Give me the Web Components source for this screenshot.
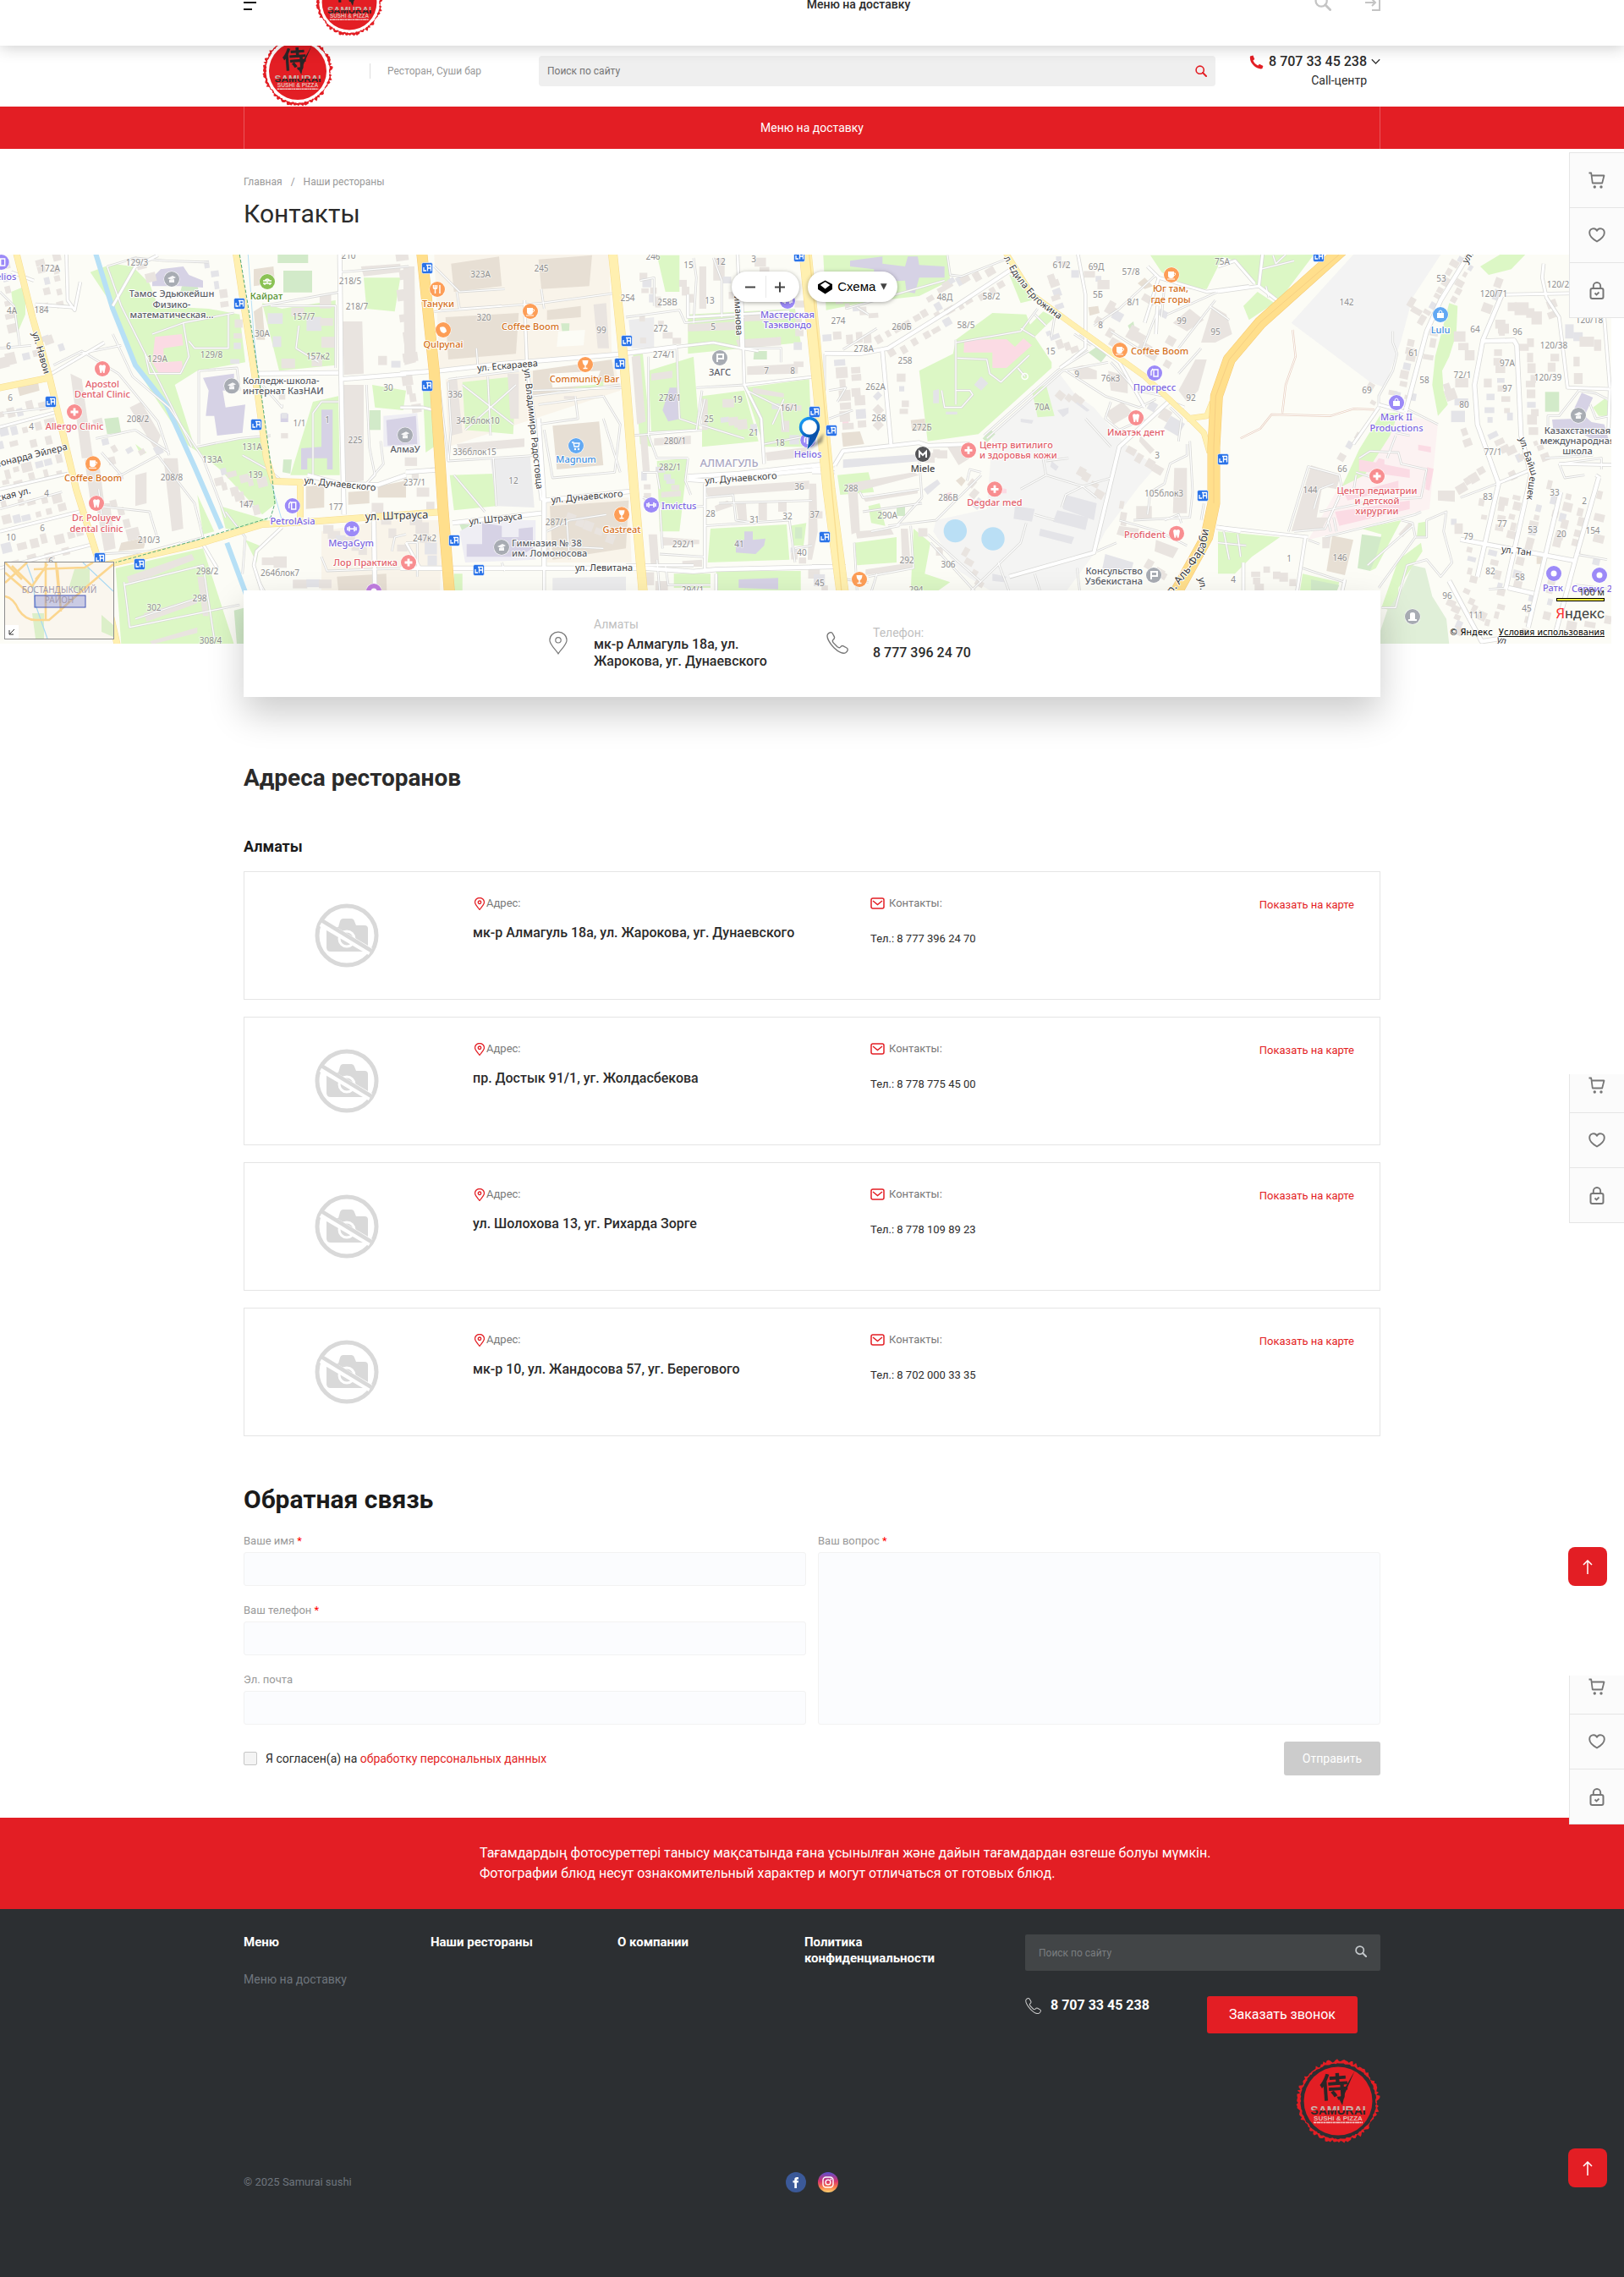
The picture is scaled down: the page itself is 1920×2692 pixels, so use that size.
<!DOCTYPE html>
<html lang="ru">
<head>
<meta charset="utf-8">
<meta name="viewport" content="width=device-width, initial-scale=1">
<title>Контакты</title>
<style>
  :root {
    --red: #e31e24;
    --dark: #2c2f32;
    --line: #e5e5e5;
    --muted: #999;
    --gutter: 15%;
  }
  body {
    margin: 0;
    position: relative;
    background: #fff;
    color: #2b2b2b;
    font-family: Roboto, "Liberation Sans", sans-serif;
    font-size: 14px;
    line-height: 20px;
  }
</style>
</head>
<body>
<site-header></site-header>
<nav-bar></nav-bar>
<main>
  <page-head></page-head>
  <city-map></city-map>
  <contact-card></contact-card>
  <restaurant-list>
    <restaurant-item address="мк-р Алмагуль 18а, ул. Жарокова, уг. Дунаевского" phone="8 777 396 24 70"></restaurant-item>
    <restaurant-item address="пр. Достык 91/1, уг. Жолдасбекова" phone="8 778 775 45 00"></restaurant-item>
    <restaurant-item address="ул. Шолохова 13, уг. Рихарда Зорге" phone="8 778 109 89 23"></restaurant-item>
    <restaurant-item address="мк-р 10, ул. Жандосова 57, уг. Берегового" phone="8 702 000 33 35"></restaurant-item>
  </restaurant-list>
  <feedback-form></feedback-form>
</main>
<notice-band></notice-band>
<site-footer></site-footer>
<sticky-header></sticky-header>
<side-panel style="--top:180px;--height:196px"></side-panel>
<side-panel style="--top:1270px;--height:176px"></side-panel>
<side-panel style="--top:1981px;--height:176px"></side-panel>
<up-button style="--top:1829px"></up-button>
<up-button style="--top:2540px"></up-button>

<script>
const define = (name, html, after) => customElements.define(name, class extends HTMLElement {
  connectedCallback() {
    if (this.shadowRoot) return;
    const root = this.attachShadow({ mode: 'open' });
    const t = document.createElement('template');
    t.innerHTML = '<style>:host,*{box-sizing:border-box}a{color:inherit;text-decoration:none}button,input,textarea{font:inherit}svg{display:block}</style>' +
      (typeof html === 'function' ? html(this) : html);
    root.append(t.content.cloneNode(true));
    if (after) after(root);
  }
});

/* Repeatable pseudo-random numbers for the hand-drawn shapes */
const random = seed => () => (seed = (seed * 16807) % 2147483647) / 2147483647;

const svg = (w, h, box, body, attrs = '') =>
  `<svg width="${w}" height="${h}" viewBox="${box}" fill="none" aria-hidden="true" ${attrs}>${body}</svg>`;
const icons = {
  search: (c, s = 14, w = 2) => svg(s, s, '0 0 14 14', `<circle cx="5.7" cy="5.7" r="4.6" stroke="${c}" stroke-width="${w}"/><path d="M9 9l4 4" stroke="${c}" stroke-width="${w + .4}" stroke-linecap="round"/>`),
  handset: c => svg(17, 17, '0 0 17 17', `<path d="M1 1.6 4.4.5 6.3 5 4.4 6.6C5.4 9 7.5 11.3 10.2 12.6L12 10.7l4.400 2.200-1.100 3.400C8.400 17.600-.4 9.500 1 1.600z" fill="${c}"/>`),
  handsetLine: (c, s) => svg(s, s, '0 0 26 26', `<path d="M1.600 2.800C3.400.5 6-.2 7.300 2l2.100 3.900c.6 1.500-.1 2.500-1.500 3.600-1 .9-.6 2.100.3 3.400l4.800 4.900c1.300 1 2.500 1.400 3.500.3 1.100-1.400 2.200-2 3.700-1.300l3.800 2.200c2.100 1.300 1.300 3.700-1 5.500-3 2.200-8.800-.6-13.800-5.500C4.400 14.100-.7 6.200 1.600 2.800z" stroke="${c}" stroke-width="1.400"/>`),
  pin: (c, w, h, s) => svg(w, h, '0 0 24 30', `<path d="M12 29C9 24 1 17.500 1 11.500a11 10.500 0 0 1 22 0C23 17.500 15 24 12 29z" stroke="${c}" stroke-width="${s}"/><circle cx="12" cy="11.500" r="3.500" stroke="${c}" stroke-width="${s}"/>`),
  mail: svg(17, 14, '0 0 17 14', '<rect x="1" y="1" width="15" height="12" rx="2" stroke="#e31e24" stroke-width="1.500"/><path d="M3 4l5.500 4.500L14 4" stroke="#e31e24" stroke-width="1.500"/>'),
  cart: svg(20, 20, '0 0 20 20', '<path d="M.5 1.500h2.700l1.600 12h11.400L18.500 4.500H4" stroke="#777" stroke-width="1.800" stroke-linejoin="round"/><circle cx="7.300" cy="18" r="1.700" fill="#777"/><circle cx="15" cy="18" r="1.700" fill="#777"/>'),
  heart: svg(20, 18, '0 0 20 18', '<path d="M10 16.500C5 13.500 1.200 10 1.200 6.200c0-5.400 6.700-6.600 8.800-2.400 2.100-4.200 8.800-3 8.800 2.400 0 3.800-3.800 7.300-8.800 10.300z" stroke="#777" stroke-width="1.900" stroke-linejoin="round"/>'),
  lock: svg(18, 21, '0 0 18 21', '<rect x="1.500" y="8" width="15" height="12" rx="2" stroke="#777" stroke-width="2"/><path d="M4.800 8V5.200a4.200 4.200 0 0 1 8.400 0V8" stroke="#777" stroke-width="1.900"/><path d="M6.500 13.500l2 2 3-3" stroke="#777" stroke-width="1.800"/>')
};

/* Brand seal: red disc inside a torn ring */
const seal = (() => {
  const r = random(77), out = [], inn = [];
  for (let i = 0; i < 150; i++) {
    const a = i / 150 * Math.PI * 2, o = 45.5 + r() * 4.5;
    out.push(`${(50 + o * Math.cos(a)).toFixed(1)} ${(50 + o * Math.sin(a)).toFixed(1)}`);
    const n = 43.8 + r() * 1.6;
    inn.unshift(`${(50 + n * Math.cos(a)).toFixed(1)} ${(50 + n * Math.sin(a)).toFixed(1)}`);
  }
  return `M${out.join('L')}ZM${inn.join('L')}Z`;
})();
define('brand-logo', `<style>:host{display:block;width:var(--size,84px);flex:none}svg{width:100%;height:auto}</style>
<svg viewBox="0 0 100 100" role="img" aria-label="Samurai Sushi &amp; Pizza">
<defs><linearGradient id="g" x1="0" y1="0" x2="0" y2="1"><stop offset=".52" stop-color="#c9b3ab"/><stop offset=".52" stop-color="#2b2627"/></linearGradient></defs>
<path d="${seal}" fill="#e31e24"/><circle cx="50" cy="50" r="40.500" fill="#e31e24"/>
<text x="28" y="46" font-family="Noto Sans CJK JP,sans-serif" font-weight="700" font-size="34" fill="#2b2627" transform="rotate(-4 44 36)">侍</text>
<path d="M69.500 14.500L58 41l-3 14-3-6 3-9z" fill="#2b2627"/>
<text x="50" y="66" text-anchor="middle" font-family="Liberation Sans,sans-serif" font-weight="700" font-size="14" fill="url(#g)">SAMURAI</text>
<text x="50" y="72.500" text-anchor="middle" font-family="Liberation Sans,sans-serif" font-weight="700" font-size="8" fill="#e3b9b2">SUSHI &amp; PIZZA</text>
<path d="M21 75.300H79" stroke="#f3c4c2" stroke-width="1.800" stroke-dasharray="3 .5 5 .4 2 .5"/></svg>`);

define('site-header', `<style>
:host{display:flex;align-items:center;padding:42px var(--gutter) 0}
brand-logo{margin:0 43px 0 22px}
p{margin:0;padding-left:20px;width:200px;border-left:1px solid #ddd;font-size:12px;line-height:18px;color:var(--muted)}
form{flex:1;display:flex;align-items:center;height:36px;padding:0 10px;border-radius:4px;background:#efefef;margin-right:40px}
input{flex:1;min-width:0;border:0;padding:0;background:none;outline:0;font-size:12px}
input::placeholder{color:#757575;opacity:1}
form button{border:0;background:none;padding:0}
.tel{display:grid;grid-template-columns:17px auto 11px;align-items:center;column-gap:5px;width:155px}
.tel b{font-weight:500;font-size:16px;line-height:22px;text-align:right;white-space:nowrap}
.tel span{grid-column:1/3;text-align:right;color:#2b2b2b;line-height:22px}
</style>
<brand-logo></brand-logo><p>Ресторан, Суши бар</p>
<form><input type="search" placeholder="Поиск по сайту" aria-label="Поиск по сайту"><button type="button" aria-label="Найти">${icons.search('#e31e24', 14, 1.6)}</button></form>
<div class="tel">${icons.handset('#e31e24')}<b>8 707 33 45 238</b>${svg(11, 8, '0 0 11 8', '<path d="M.8 1.300l4.700 4.700 4.700-4.700" stroke="#333" stroke-width="1.300"/>')}<span>Call-центр</span></div>`);

define('nav-bar', `<style>:host{display:block;background:var(--red);padding:0 var(--gutter)}
a{display:block;height:50px;line-height:50px;text-align:center;color:#fff;border:solid rgba(255,255,255,.25);border-width:0 1px}</style>
<nav><a href="#">Меню на доставку</a></nav>`);

define('page-head', `<style>:host{display:block;padding:30px var(--gutter) 29px}
nav{display:flex;gap:10px;font-size:12px;line-height:18px;color:var(--muted)}
h1{margin:10px 0 0;font-size:30px;line-height:38px;font-weight:400}</style>
<nav><a href="#">Главная</a><span>/</span><a href="#">Наши рестораны</a></nav><h1>Контакты</h1>`);

define('sticky-header', `<style>
:host{position:absolute;top:-48px;left:0;right:0;height:102px;padding:0 var(--gutter);display:grid;grid-template-columns:1fr auto 1fr;align-items:center;background:#fff;box-shadow:0 2px 18px rgba(0,0,0,.2)}
div{display:flex;align-items:center}div:last-child{justify-content:flex-end;gap:40px}
brand-logo{--size:80px;margin-left:70px}a{font-weight:500;padding:4px 0 0 110px}
button{border:0;background:none;padding:0}
</style>
<div><button aria-label="Меню">${svg(15, 18, '0 0 15 18', '<path d="M0 1h15M0 9h15M0 17h10" stroke="#111" stroke-width="2.200"/>')}</button><brand-logo></brand-logo></div>
<a href="#">Меню на доставку</a>
<div><button aria-label="Поиск">${icons.search('#c4c4c4', 20, 1.6)}</button><button aria-label="Войти">${svg(18, 20, '0 0 18 20', '<path d="M8 1h9v18H8M0 10h12M8 6l4 4-4 4" stroke="#c4c4c4" stroke-width="2"/>')}</button></div>`);

/* ---- City map. Shapes are listed per 480px tile in thirds of a pixel. ---- */
const TX = { A: 0, B: 480, C: 960, D: 1440 };
const pt = (t, x, y) => [TX[t] + x / 3, y / 3 - 6];
const line = (t, s) => s.split(' ').map(p => pt(t, ...p.split(',').map(Number)).map(n => n.toFixed(1)).join(' ')).join('L');
function drawMap() {
  let o = '';
  const polys = (fill, t, list) => { for (const s of list.split('|')) o += `<path d="M${line(t, s)}Z" fill="${fill}"/>`; };
  const G = '#dcf7c5', P = '#d2eac9', B = '#e9e4e0', T = '#e7dfd4', L = '#d6d2e5', K = '#fbdbe4', S = '#e4e4e8';
  polys('#f9f4ea', 'B', '100,18 720,18 730,380 120,430|140,460 740,400 760,500 150,700|-80,960 130,960 120,1215 -300,1215 -300,1000|500,880 790,880 800,1110 500,1110');
  polys('#f4f4f3', 'C', '870,430 930,510 1000,560 1110,690 1220,770 1160,840 1040,1000 1000,1080 900,1215 640,1215 520,1140 430,1000 440,960 620,920 640,660');
  polys('#f3f3f3', 'D', '480,18 790,18 690,170 650,320 590,490 540,470 260,260');
  polys('#fcf2f2', 'D', '640,580 780,615 750,920 320,1030 430,840 600,660');
  polys(G, 'A', '320,80 400,50 470,60 530,120 560,200 740,210 850,230 870,400 700,430 620,480 690,700 930,660 980,900 930,940 780,780 720,730 660,690 560,540 490,430 400,200|410,1130 720,1060 830,1400 430,1400|930,190 1000,210 1190,180 1190,410 990,430|1290,100 1420,100 1400,220 1300,210|1110,540 1200,520 1205,800 1030,800|40,150 90,130 90,230 60,300|780,910 950,960 870,1000 800,990|700,870 760,1000 720,1010|1320,480 1440,500 1430,570 1330,560|870,1030 920,1050 910,1110|480,690 520,720 500,730');
  polys(P, 'A', '985,18 1093,18 1093,48 985,48|1005,75 1107,75 1107,152 1005,152|370,600 420,595 430,650 380,655|1310,570 1350,570 1350,640 1310,640|830,1280 870,1270 870,1400 840,1400|1005,745 1035,745 1030,795 1002,790|645,130 700,125 705,150 640,150');
  polys(G, 'B', '155,800 310,795 320,910 170,925|200,470 390,450 380,655 210,640|510,460 700,440 700,490 520,500|890,20 970,20 970,150 920,150|860,430 1020,380 1040,640 870,650|1200,490 1430,460 1440,700 1270,700|1000,230 1380,210 1400,330 1000,370|1050,520 1200,500 1250,680 1050,700|890,750 1000,740 970,1000 900,1000|1080,990 1350,975 1360,1100 1070,1110|60,500 85,500 100,700 70,720|1100,1140 1400,1140 1400,1215 1100,1215|805,370 840,370 870,700 830,690|950,1150 1080,1150 1080,1200 950,1200|60,18 80,60 90,160|1360,980 1420,970 1410,1050 1370,1050|170,1150 200,1150 200,1215 170,1215');
  polys(P, 'B', '550,262 580,262 578,300 556,305|1235,360 1280,360 1280,390 1232,390|190,975 240,975 240,1000 200,1000|1380,985 1405,985 1405,1025 1380,1025');
  polys(G, 'C', '510,320 640,225 760,230 790,310 850,400 850,420 590,655 410,680 380,430 500,370|780,500 830,480 860,590 800,595|360,990 420,1040 400,1150 490,1180 440,1215 350,1215|40,20 480,20 490,110 380,165 200,185 50,215|750,290 820,220 860,240 790,310|90,800 200,790 220,860 100,870|150,1040 300,1020 300,1110 160,1120|1200,20 1460,20 1430,80 1400,140 1340,140 1240,80|700,90 760,110 780,180 740,190|200,910 240,900 260,980 210,970');
  polys(P, 'C', '605,670 635,640 650,655 620,685|980,365 1010,345 1045,375 1025,400|300,908 330,905 330,945 300,945|1120,270 1140,255 1145,285 1130,290');
  polys(G, 'D', '0,20 340,18 210,190 140,130 60,40|90,200 140,150 200,190 110,250|820,190 850,200 845,300 820,380 795,430 800,500 815,550 780,590 760,480 770,380|930,60 1000,18 1090,18 1040,70 960,90|0,1000 220,1020 120,1090 60,1150 0,1150|580,580 640,580 610,660 520,800 440,840 500,710|510,990 650,960 560,1130 540,1140 580,1010|640,1100 720,1040 725,1070 640,1200 640,1290 580,1270|1330,560 1370,530 1390,540 1390,590 1350,590|300,1150 430,1180 420,1215 290,1215|710,970 735,965 740,1020 705,1020');
  polys(P, 'D', '510,1010 580,1020 560,1090 540,1140 495,1130|1160,505 1210,505 1210,575 1160,575|330,1170 430,1190 420,1215 330,1215');
  polys('#e0efd8', 'D', '560,1400 600,1280 650,1210 690,1120 735,1130 760,1230 810,1310 820,1400');

  /* Buildings */
  polys(L, 'A', '540,100 570,70 650,60 670,90 720,110 720,135 640,130 540,130|720,455 830,440 830,500 790,500 800,560 870,550 860,650 770,660 760,590 730,590 740,500|1140,568 1180,568 1180,780 1160,780 1160,740 1090,740 1090,780 1068,780 1068,705 1140,700|1370,605 1475,590 1480,690 1375,695|995,583 1022,583 1022,612 995,612');
  polys(B, 'A', '580,740 630,740 650,990 610,1000|250,440 290,460 330,740 290,740|460,560 500,540 570,660 550,710|300,745 350,745 370,900 320,890|1215,255 1285,255 1290,440 1220,445|1430,60 1470,60 1475,400 1435,410|1215,480 1290,480 1290,820 1215,830|450,1160 680,1080 690,1100 460,1190|510,1290 700,1235 700,1255 520,1320|530,1390 700,1340 700,1360 540,1400|480,800 520,790 520,900 480,910|1280,60 1420,50 1420,80 1290,95|700,1160 725,1160 740,1300 720,1300|340,900 390,900 410,1060 370,1070');
  polys(T, 'A', '900,70 970,60 975,120 900,130|900,220 930,200 940,320 910,320|1085,840 1150,835 1150,915 1085,920|1235,860 1310,855 1310,900 1235,905|1195,1160 1370,1150 1372,1210 1200,1210|1340,840 1440,820 1440,880 1340,880|430,1040 520,1020 510,1060 420,1070|60,480 135,470 140,500 70,520');
  polys(K, 'A', '550,310 645,300 650,340 580,350 580,400 645,395 650,435 565,440 540,400');
  polys('#efeef4', 'B', '-80,590 40,580 50,700 -80,700|190,1000 260,960 460,960 460,1100 210,1110');
  polys(L, 'B', '270,970 340,980 340,1020 400,1020 400,990 450,985 450,1060 400,1090 215,1090 215,1045 270,1045|-70,605 35,590 40,690 -65,695|935,490 960,490 965,540 975,600 930,610 910,570|1170,1030 1200,1030 1200,1000 1230,1000 1230,1030 1275,1025 1270,1050 1240,1080 1170,1075|1180,1170 1320,1165 1320,1205 1180,1200');
  polys('#ececed', 'B', '300,745 440,735 455,915 320,910|790,250 880,240 880,350 800,350|520,1165 780,1160 780,1215 520,1215');
  polys(T, 'B', '160,50 330,25 340,130 170,150|470,35 660,20 650,130 480,140|140,240 400,225 390,370 150,390|520,625 685,610 700,765 535,780|500,215 620,200 620,240 500,250|450,430 730,390 740,460 450,520|510,910 790,890 780,1060 520,1100');
  polys('#fcfcf6', 'B', '540,290 635,285 630,340 535,345|510,440 690,430 670,480 520,490');
  polys(B, 'B', '665,195 710,190 720,350 680,350|145,470 180,450 200,650 160,660|360,440 400,440 400,600 370,600|180,690 420,670 420,700 190,720|560,520 600,520 600,530 560,530|800,380 830,375 850,610 820,620|830,660 855,660 865,790 840,790|870,440 945,430 945,455 870,465|880,670 1010,660 1010,690 880,695|1000,265 1190,255 1190,285 1000,290|1210,415 1390,405 1390,440 1210,445|1060,845 1430,820 1430,850 1070,875|860,1010 890,1010 900,1140 870,1140|1195,225 1345,215 1345,250 1200,255|1170,320 1330,310 1330,340 1180,350|1090,30 1130,30 1130,110 1090,110|1040,60 1065,60 1065,210 1040,210|1230,490 1340,510 1340,525 1230,510|1275,720 1430,700 1430,735 1280,750|910,1020 1040,1030 1040,1045 910,1050|905,860 975,855 975,875 905,880|1430,830 1455,830 1460,1000 1440,1100 1425,1100|1095,910 1140,890 1160,910 1100,930|1170,900 1205,895 1210,960 1180,965|1250,895 1280,895 1280,960 1250,960|1320,890 1350,890 1350,930 1320,930|1050,530 1070,530 1070,640 1050,640|980,1105 1050,1100 1050,1125 980,1125');
  polys(L, 'C', '135,40 250,25 250,50 330,60 340,25 375,25 380,55 470,60 470,100 380,100 365,155 335,150 330,110 140,120 220,90 220,70 135,60');
  polys(K, 'C', '540,320 690,318 720,345 750,315 780,340 690,420 640,420 640,365 538,365|475,865 495,860 495,890 475,895|670,845 690,850 690,865 670,865|108,600 130,600 130,620 108,620');
  polys(S, 'C', '110,745 390,725 390,750 110,775|720,910 790,920 780,965 715,955|870,925 980,950 970,995 855,965|900,870 1010,900 1000,960 890,920|810,990 930,1020 920,1045 805,1015|1040,1080 1140,1110 1130,1150 1030,1130|600,450 625,475 600,500 575,480|430,500 450,495 450,545 430,545|640,1150 690,1160 680,1180 640,1175|850,750 875,770 865,785 845,770|870,570 910,560 910,580 890,595|395,850 445,815 455,830 410,870|935,530 985,570 975,575 935,545|740,600 785,605 780,618 740,612|475,575 515,575 515,585 475,585');
  polys(B, 'C', '125,830 360,790 380,800 150,860|180,880 375,850 375,865 190,895|155,1000 280,990 290,1010 160,1025|190,1135 355,1110 355,1130 190,1155|315,990 340,990 350,1120 320,1120|125,830 160,830 170,1000 140,1010|1040,580 1100,540 1140,580 1070,620|1280,260 1340,210 1390,250 1330,290|1300,500 1360,390 1400,390 1370,500 1330,540|1420,200 1470,230 1490,300 1430,330 1380,330|1285,775 1330,775 1330,935 1280,935|1150,910 1205,910 1205,955 1150,955|920,420 960,410 1010,430 1010,460 950,460|1050,430 1120,450 1120,510 1060,500|1090,980 1160,990 1150,1030 1080,1010|1220,1030 1300,1060 1280,1095 1215,1070|480,700 520,690 560,740 520,765|1165,660 1215,710 1200,725 1160,680');
  polys(T, 'C', '105,650 170,645 185,690 110,700|980,205 1015,200 1020,225 985,235|510,820 530,805 545,820 530,840|350,605 400,600 405,640 355,645|1155,120 1180,100 1210,130 1180,140');
  polys(B, 'D', '330,765 435,800 420,850 370,840 350,950 390,950 370,990 260,1000|780,855 840,855 840,895 780,890|640,1010 680,965 690,975 655,1020|370,1020 400,1020 395,1060 370,1060');
  polys(T, 'D', '405,1015 480,1030 450,1155 385,1140|1130,1090 1150,1090 1145,1115 1130,1115');
  polys(K, 'D', '500,745 560,755 570,740 590,745 590,762 680,780 680,810 500,785|415,930 680,890 680,920 430,980|450,870 640,820 640,850 460,890|710,692 755,700 755,720 710,712|742,772 765,778 750,855 735,850');
  polys(L, 'D', '1290,508 1330,525 1300,590 1325,612 1370,620 1390,690 1320,670 1290,650 1190,650 1185,603 1260,600 1265,560');

  /* Rows of small houses */
  const rnd = random(4211);
  const row = (t, x1, y1, x2, y2, n, size, rot) => {
    for (let i = 0; i < n; i++) {
      const k = n > 1 ? i / (n - 1) : 0;
      const [x, y] = pt(t, x1 + (x2 - x1) * k + rnd() * 16 - 8, y1 + (y2 - y1) * k + rnd() * 16 - 8);
      const w = size * (.6 + rnd() * .7), h = size * (.6 + rnd() * .6);
      o += `<rect x="${(x - w / 2).toFixed(1)}" y="${(y - h / 2).toFixed(1)}" width="${w.toFixed(1)}" height="${h.toFixed(1)}" fill="${rnd() > .2 ? B : S}" transform="rotate(${rot} ${x.toFixed(1)} ${y.toFixed(1)})"/>`;
    }
  };
  const rows = (t, spec) => spec.split('|').forEach(s => row(t, ...s.split(',').map(Number)));
  rows('A', '150,40,170,190,5,9,-14|195,30,220,190,5,9,-14|20,50,40,280,6,10,-14|150,310,210,340,3,10,-20|0,590,150,550,5,10,-14|20,650,170,620,5,10,-14|0,700,170,680,4,9,-14|20,790,210,740,6,10,-14|20,830,210,790,5,9,-14|20,900,210,880,5,10,-14|20,960,220,920,6,9,-14|30,1060,290,1000,7,10,-14|60,1110,230,1070,4,9,-14|0,410,130,360,4,12,-14|790,780,930,830,5,10,-14|770,820,910,920,6,10,-14|480,30,530,100,3,10,-14|740,60,800,190,5,9,-8|970,240,980,330,2,15,0|1060,220,1110,270,2,14,0|1150,190,1160,330,3,15,0|1020,400,1130,400,2,14,0|1360,400,1410,400,2,12,0|950,1110,990,1110,2,14,0|1070,1180,1150,1190,3,14,0|840,260,840,390,4,9,0|340,610,420,810,4,10,-14|410,710,560,720,4,10,-30|1340,920,1420,1060,4,12,0|1160,990,1290,1070,6,12,0|400,900,470,1010,4,12,-14|1000,520,1010,660,3,9,0');
  rows('B', '-20,20,10,380,6,14,-8|0,460,40,560,4,10,-8|20,760,80,900,4,12,0|40,960,100,1100,5,13,0|850,90,890,190,5,11,0|850,150,840,330,3,9,0|1260,40,1280,150,4,11,0|910,270,960,330,3,10,0|980,120,1010,180,3,10,0|1130,600,1230,640,4,10,-6|1350,620,1370,680,2,12,0|900,780,960,840,4,9,0|850,800,860,880,3,9,0|1150,540,1180,620,2,12,0|1390,200,1400,400,5,10,0|1310,560,1400,560,4,10,0|1440,1140,1480,1210,3,12,0|860,1160,900,1200,2,13,0|460,1040,500,1080,2,12,0|1110,70,1180,200,4,8,0|1370,1060,1400,1100,3,8,0|590,950,720,1020,5,10,20');
  rows('C', '90,180,210,240,5,9,-4|60,310,200,320,5,11,-4|230,320,440,200,7,9,-30|290,370,480,260,6,9,-30|420,170,520,110,4,9,-30|450,240,670,130,7,9,-30|490,110,630,80,4,9,-30|100,400,120,630,7,11,-4|150,420,170,620,6,10,-4|320,460,330,580,4,10,0|230,520,230,620,3,9,45|850,100,880,200,5,9,-20|990,90,1040,130,3,11,0|870,30,930,80,3,9,0|840,300,930,360,5,9,-20|880,520,960,540,4,8,40|1060,210,1090,240,3,13,30|1020,260,1080,330,3,13,30|1140,290,1200,370,4,14,30|1200,180,1250,220,2,13,30|1280,320,1260,400,2,10,30|540,1080,600,1190,4,9,30|960,790,1020,860,4,9,30|1200,560,1290,620,3,15,30|400,1000,450,1070,2,10,0|570,830,590,900,3,12,40|1140,720,1220,780,4,11,30|1100,910,1110,970,3,8,10|70,800,30,940,2,10,0|1200,1110,1280,1190,4,10,30|420,740,470,720,3,10,0');
  rows('D', '860,30,740,220,8,9,30|890,60,830,180,5,8,30|690,190,720,250,3,11,30|690,330,660,480,6,9,12|770,290,740,380,3,10,10|620,510,690,530,4,8,10|540,480,550,540,2,8,30|860,310,890,380,3,11,0|870,480,850,590,3,13,0|820,490,830,510,2,11,-20|870,640,880,690,2,11,-20|960,480,960,610,4,9,0|990,360,1030,600,8,9,0|1000,120,960,210,3,11,20|1000,260,1010,300,3,10,0|1040,200,1130,240,4,13,0|1110,330,1080,350,2,12,0|1110,390,1120,640,9,10,0|1190,380,1190,420,2,9,0|1245,290,1340,340,4,14,0|1270,400,1275,450,2,11,0|980,660,1070,740,5,10,-25|1080,740,1050,800,2,10,-25|870,840,930,790,4,10,-30|930,900,940,950,2,9,10|1010,890,1000,980,4,9,10|1060,880,1040,1010,5,9,14|1130,920,1100,1060,6,9,14|1180,830,1190,940,3,9,14|1240,880,1210,1040,6,9,14|1290,930,1270,1080,5,9,14|1350,870,1340,1100,4,10,14|890,1060,900,1170,4,9,14|980,1080,1000,1220,5,9,14|1070,1100,1060,1190,3,9,14|1110,1230,1080,1350,4,9,14|1190,1170,1170,1300,4,9,14|830,1250,860,1350,5,9,25|880,1220,930,1300,4,9,25|130,1150,140,1200,3,9,0|180,1140,260,1180,4,9,0|500,660,440,740,3,8,30|1190,190,1180,230,2,10,-20|840,970,850,990,2,11,0|1380,1320,1260,1340,3,11,10|1130,680,1160,730,3,8,-20|1010,1260,960,1320,3,9,14');

  /* Water */
  o += `<g fill="none" stroke="#b7e0f6" stroke-linejoin="round"><path stroke-width="6" d="M${line('A', '335,0 400,210 480,410 590,550 690,770 785,990')}M${line('A', '805,1040 870,1215 930,1400')}"/><path stroke-width="1" d="M${line('A', '880,18 900,300 930,600 960,820 1000,960')}"/></g>`;
  for (const [x, y] of [[508, 998], [642, 1026]]) { const [a, b] = pt('C', x, y); o += `<circle cx="${a}" cy="${b}" r="13.7" fill="#badff5"/>`; }

  /* Roads: casing first, then fill */
  const roads = [];
  const road = (w, kind, t, list) => list.split('|').forEach(s => roads.push([w, kind, 'M' + line(t, s)]));
  road(1.2, 0, 'A', '380,60 480,30 590,40 740,45|540,300 650,260 830,225|650,260 670,380 640,440 530,440 515,370|670,325 690,350 810,350 810,230|705,690 705,430 840,420 850,500|700,700 850,670 960,660|190,410 290,360 420,440 560,610 600,730|280,370 430,340|340,670 480,640 600,720|360,720 430,800 560,730 690,900 720,1020|350,1080 550,1070 720,1020|350,910 530,930 560,1030|400,300 470,450 600,560 720,740 800,950|440,1180 460,1340 850,1260|440,1190 720,1120 760,1380|480,1310 720,1230|1300,480 1310,700 1330,800 1300,830|1110,800 1110,580 1140,540 1200,540|930,480 1000,560 1000,550|930,200 1210,150|1210,80 1450,60|1060,270 1050,350 1130,400|960,200 1190,200 1190,420|0,350 110,340|0,150 50,200 70,340|10,580 180,560|350,850 360,940|910,1160 940,1215|1140,1090 1160,1140 1440,1130|1390,1070 1400,1020 1440,1010|800,930 870,1020 860,1150|380,60 430,200 590,520 680,700|1350,680 1360,760 1300,830|0,920 220,860|420,1100 640,1040|860,730 950,780 1000,820');
  road(2.8, 0, 'A', '235,0 240,180 265,215 285,115|125,195 260,205|0,630 195,578|0,850 240,795|0,1000 300,925|0,1130 330,1045|175,445 370,330|1000,985 910,1070 900,1120 930,1215|720,1045 770,1130|400,200 480,60 560,20|40,80 120,110');
  road(4.5, 0, 'A', '905,440 1200,437|1205,0 1210,460 1220,940|1210,460 1440,442|1090,800 1200,830 1340,835 1440,800|1325,930 1330,1215');
  road(1.2, 0, 'B', '100,60 190,150 350,140|180,150 190,210 340,200|480,140 490,210|100,220 480,190 740,155|250,350 255,420|470,550 700,520|600,520 610,600 470,620|700,520 760,620 740,790 520,810 490,640|700,600 760,790|440,520 760,480|150,470 160,640 150,750 460,730|310,740 320,910|450,500 770,490|860,380 860,660 890,740 1000,740|860,650 1030,640 1050,500|960,350 970,600 1030,620|780,240 970,215 990,260 1200,240|830,110 880,100 880,200|1020,30 1030,100 1020,260|1090,30 1120,110 1120,240|1030,490 1200,480|1060,530 1040,620 1200,670|1200,350 1330,350 1330,400|1210,500 1330,560 1340,640|1270,690 1430,660|1340,530 1300,620|900,920 1060,910|1060,880 1160,870 1170,960 1240,970|1110,900 1440,890|900,1080 1060,1090|1060,980 1360,960 1380,1110|840,880 900,900 910,1060|1000,740 990,820 1010,870|500,1000 580,960 710,940|500,1050 700,1060|570,960 580,1100|150,460 400,430|60,500 120,500 150,750|800,660 1050,640|840,790 890,790 900,850|890,1100 900,1215|1380,1060 1440,1050|0,1040 40,1040 40,1160|200,480 380,620|210,640 390,480|170,800 280,930|290,450 300,660|340,1110 350,1140|920,1120 930,1190 1080,1190');
  road(2.6, 0, 'B', '-20,560 60,560 100,570|490,890 490,1215|1190,120 1200,480 1260,600 1270,760|1175,0 1190,350|960,345 1090,330 1190,350 1250,360|1200,480 1460,450|1060,830 1060,1140|1000,160 1000,240 1360,220|780,1120 1020,1120|1100,1150 1100,1215|460,730 480,890|420,180 430,430 460,640|0,1040 50,1130');
  road(4.5, 0, 'B', '-20,440 120,430 340,405 750,372 960,345|470,600 490,890 490,1130|490,890 800,857|165,970 480,935|-20,1130 130,1130 850,1130 1020,1142 1100,1135 1510,1125|0,790 130,780|1000,805 1180,795 1500,760|1000,815 1060,820 1510,775');
  road(1.2, 0, 'C', '480,20 490,90 530,95 700,30|120,210 470,110|160,205 200,230|45,370 45,500|60,500 120,490 90,540|145,570 60,600|230,280 110,355|510,320 510,550|515,385 620,390 630,440 670,470 770,375|510,500 560,500 570,515 530,560 470,560 460,500|730,420 755,450|510,330 740,290 800,210|740,280 790,310|790,230 830,270|610,660 870,430 980,360|620,670 890,430 1050,400|900,430 1040,520 1160,560 1220,530|740,850 830,800 960,840 1060,810|830,800 815,720|830,750 910,740|900,870 960,840 1010,880|900,870 885,915|790,940 860,960|760,970 740,1040 560,1215|660,1110 700,1215|410,1010 600,1180|420,1040 580,1215|390,880 300,980|270,980 440,960 600,800|550,820 560,780 600,790|390,880 380,740|350,980 360,1130 200,1160|170,860 180,880 380,850|180,930 390,900|210,1000 310,980|790,1150 810,1215|950,300 1060,370 1200,470|970,600 1060,700|1060,540 1040,600 1090,640 1180,600|1060,400 1150,500 1250,520|1000,270 1090,210 1220,90|1060,290 1170,360 1220,230|1240,240 1250,130|1260,230 1440,150|1300,350 1430,180|1270,560 1310,600 1300,680|1330,690 1330,730 1270,760 1250,830 1200,860 1190,940|1340,680 1350,860 1340,950 1140,960|1090,960 1230,1000 1330,1050|1010,1070 1080,1040|1380,960 1390,900|1250,960 1300,940 1310,970|1410,200 1480,250|1380,350 1300,440|860,240 850,310|930,300 990,340|150,1040 160,1215|230,1150 210,1215|940,1130 950,1215|120,1170 200,1180');
  road(2.8, 0, 'C', '940,0 970,160 970,350 920,390 880,420|1190,60 1230,100 1400,150 1550,130|1180,260 1230,100|980,320 1090,400 1180,560|1225,200 1220,300|1320,560 1270,540|0,770 80,765|0,790 80,790');
  road(4, 0, 'C', '45,368 170,370 270,350 480,220 700,75|250,360 280,690|80,765 110,715 380,685 410,695 560,690|1270,535 1090,700 1000,1075 700,1160|0,1125 120,1125|1435,985 1520,1000');
  road(1.2, 0, 'D', '195,20 205,50 240,18|150,70 270,40|620,290 620,330 635,370 620,430 570,520 570,560|500,740 540,715 640,720 650,760 740,780 720,880 560,890 360,930|490,800 480,860|490,790 550,810|630,660 600,740|660,560 780,620|680,660 630,650|380,1020 700,940 720,930|430,880 390,960 400,1000|410,950 420,1000|250,1000 320,770 430,800 440,850 380,990 270,1000|340,920 360,850 410,830|650,960 690,970 700,1020 570,1200|700,1020 740,1020 740,960 810,930 800,1000 830,1110 790,1160 740,1100 670,1120 630,1270 580,1270|300,1130 450,1180|0,1040 100,1050|20,1000 40,1100|70,1010 80,1090|860,880 990,830|1170,640 1170,590 1210,590 1280,500 1340,510 1380,530|1210,760 1360,740 1360,780|1210,760 1230,810 1300,800|320,1030 360,1045|1270,1190 1440,1210|960,1205 1030,1200|1265,1080 1380,1100|1160,740 1330,730|530,1120 690,980|1320,550 1340,600 1390,590|170,130 180,170');
  road(3, 0, 'D', '160,0 145,130 210,180|0,150 145,130|0,60 60,40 130,120|570,560 480,690|570,550 660,575|1155,50 1150,100 1165,170 1210,240 1240,490 1390,495|1020,160 1260,155|1340,800 1355,810|1370,240 1390,490|1390,495 1385,640|990,830 1100,785|0,985 320,1020|310,1020 280,1215|90,1110 90,1215|1210,760 1440,765|450,1170 440,1215');
  road(4.5, 0, 'D', '900,0 790,180 740,290 665,575|1005,165 940,320 910,480 920,620 995,830 920,1160|940,325 1050,322 1060,340 1075,660 1110,800 1020,1205|860,1028 1270,1105|1215,860 1100,1340|1350,810 1270,1090 1200,1350|820,1175 935,1390 1000,1380|1030,1200 1120,1220');
  road(7, 1, 'A', '55,0 115,240 175,450 270,850 345,1090 420,1420|-10,492 175,455|345,1125 700,1045 930,975 1100,965 1570,930|1065,950 1065,825 970,822 945,740 915,520 870,230 835,0');
  road(10, 1, 'B', '732,0 775,420 810,860 842,1230');
  road(14, 1, 'B', '1415,0 1455,400 1500,850 1550,1230');
  road(6, 1, 'C', '680,0 780,160 930,270 1180,450 1330,590 1390,650 1410,720|1330,600 1400,590 1420,540');
  road(12, 2, 'B', '55,0 100,430 130,900 155,1230');
  road(14, 2, 'C', '1880,0 1590,260 1480,390 1435,520 1425,700 1425,900 1400,1020 1290,1220');
  const casing = ['#d9d9d7', '#f7dc92', '#f6c973'], fill = ['#fff', '#fff0b0', '#ffdf8c'];
  o += '<g fill="none" stroke-linejoin="round">';
  for (let k = 0; k < 3; k++) {
    for (const [w, kind, d] of roads) if (kind === k) o += `<path d="${d}" stroke="${casing[k]}" stroke-width="${w + (k ? 1 : 1.6)}"/>`;
    for (const [w, kind, d] of roads) if (kind === k) o += `<path d="${d}" stroke="${fill[k]}" stroke-width="${w}"/>`;
  }
  const trail = `M${line('D', '80,670 150,635 190,585 400,590 480,565 555,568')}M${line('D', '228,580 240,480 275,380 265,285')}`;
  o += `<path d="${trail}" stroke="#e8cfc0" stroke-width="2.4"/><path d="${trail}" stroke="#fff" stroke-width="1"/>`;
  o += `<path d="M${line('C', '1870,18 1590,258 1480,390 1432,520 1425,700 1425,900')}" stroke="#f7cf82" stroke-width="1"/><path d="M${line('B', '1430,18 1470,400 1510,850 1545,1215')}" stroke="#f9dd8f" stroke-width="1.3"/>`;
  o += `<path d="M${line('A', '850,18 880,200 925,500 960,760 975,900 960,950 700,1030 410,1110')}" stroke="#57ad79" stroke-width="1" stroke-dasharray="4 2"/>`;
  const [rx, ry] = pt('C', 755, 450); o += `<circle cx="${rx}" cy="${ry}" r="3.5" stroke="#fff" stroke-width="1.5"/></g>`;

  /* House numbers */
  const text = (x, y, s, cls, rot = 0, anchor = 'middle') => {
    x = Math.round(x); y = Math.round(y);
    o += `<text class="${cls}" x="${x}" y="${y}" text-anchor="${anchor}"${rot ? ` transform="rotate(${rot} ${x} ${y - 4})"` : ''}>${s}</text>`;
  };
  const nums = {
    A: '172А,178,65|129/3,485,45|4А,42,215|184,147,212|6,31,342|6,37,524|129А,557,388|129/8,749,373|30А,929,298|157/7,1078,236|157к2,1129,379|218/5,1242,111|218/7,1267,200|210,1235,22|4,112,627|208/2,488,599|131А,893,698|133А,754,743|139,907,799|1/1,1061,615|1,1160,604|225,1260,676|30,1376,488|4,165,863|208/8,608,806|147,874,902|177,1190,912|6,149,988|10,40,1019|210/3,528,1030|298/2,735,1141|264блок7,993,1146|298,709,1235|302,547,1268|308/4,748,1385|6,180,1105',
    B: '237/1,30,826|323А,264,86|245,481,67|320,277,239|99,692,284|336,174,512|343блок10,256,605|336блок15,243,718|12,382,820|287/1,533,967|247к2,67,1022|246,875,25|15,1001,53|12,1117,43|3,1234,32|254,786,171|258В,928,187|13,1077,181|272,902,278|5,1088,272|274/1,916,373|7,1278,428|8,1370,428|278/1,935,526|19,1175,530|16/1,1359,560|25,1075,600|21,1232,647|18,1325,683|280/1,954,677|282/1,936,772|28,1079,935|31,1236,956|32,1352,946|37,1449,938|36,1394,841|292/1,983,1043|41,1183,1045|40,1405,1074|45,1467,1181|294/1,1016,1205',
    C: '48Д,472,167|58/2,635,165|61/2,884,55|69Д,1007,60|57/8,1131,79|75А,1455,41|5Б,1014,158|8/1,1140,185|274,94,252|260Б,319,274|58/5,545,268|8,1024,268|99,1310,253|95,1430,290|278А,182,352|15,846,359|258,329,392|9,940,440|76к3,1058,455|92,1344,526|262А,225,486|70А,816,558|268,237,598|272Б,391,631|3,1225,728|288,139,846|286В,483,878|290А,266,941|105блок3,1248,865|292,336,1100|306,484,1117|294,368,1205',
    D: '142,455,185|53,791,102|120/2,1207,122|120/71,979,155|64,912,283|96,1063,290|120/18,1318,248|120/38,1191,338|61,694,365|97А,1027,403|72/1,866,445|120/39,1170,452|58,733,461|97,1026,492|69,528,499|80,872,550|77/1,975,717|66,440,776|144,327,851|83,958,877|33,1195,860|2,1298,892|77,1009,973|53,1115,992|20,1217,1007|154,1330,995|79,887,1016|1,252,1096|146,431,1093|4,55,1169|82,965,1139|58,1070,1160|45,1095,1271|96,812,1228|111,915,1297'
  };
  for (const t in nums) for (const s of nums[t].split('|')) { const [v, x, y] = s.split(','); const p = pt(t, +x, +y); text(p[0], p[1] + 4, v, 'n'); }

  /* Street names */
  const st = (t, x, y, s, rot, cls = 's') => { const p = pt(t, x, y); text(p[0], p[1] + 4, s, cls, rot); };
  st('A', 148, 365, 'ул. Навои', 74); st('A', 110, 728, 'еонарда Эйлера', -14); st('A', 48, 868, 'ская ул.', -14);
  st('A', 1207, 832, 'ул. Дунаевского', 6); st('A', 1407, 946, 'ул. Штрауса', -2, 's b');
  st('B', 360, 410, 'ул. Ескараева', -5); st('B', 452, 635, 'ул. Владимира Радостовца', 84);
  st('B', 643, 877, 'ул. Дунаевского', -5); st('B', 317, 955, 'ул. Штрауса', -6); st('B', 702, 1128, 'ул. Левитана', 0);
  st('B', 1188, 811, 'ул. Дунаевского', -4); st('B', 1145, 758, 'АЛМАГУЛЬ', 0, 'd'); st('B', 1178, 215, 'Тайманова', 87);
  st('D', 1060, 1068, 'ул. Тан', 7); st('D', 886, 27, 'ул.', -58); st('C', 1385, 1185, 'ул.', 80); st('D', 1012, 1385, 'ул.', 15);
  const curve = (id, t, s, label, cls) => { o += `<path id="${id}" d="M${line(t, s)}" fill="none"/><text class="${cls}"><textPath href="#${id}">${label}</textPath></text>`; };
  curve('c1', 'C', '680,30 720,100 790,185 960,310', 'л. Едила Ергожина', 's');
  curve('c2', 'C', '1275,1225 1350,1130 1395,1060 1425,900', 'р. Аль-Фараби', 's b');
  curve('c3', 'D', '1068,670 1090,740 1108,790 1085,960', 'ул. Байшешек', 's');

  /* Places */
  const kinds = {
    food: ['#fd9e57', '#d4701a'], med: ['#f88e90', '#e2606a'], edu: ['#a8acb3', '#5c6066'], svc: ['#9c8af7', '#7c66de'],
    shop: ['#62a9f3', '#3f8fe0'], sport: ['#8bc255', '#55912b'], dark: ['#555558', '#444'], film: ['#c07de0', '#9a50c0']
  };
  const glyph = {
    cup: '<path d="M-4-4H3V1Q3 4-.5 4T-4 1z" fill="#fff"/><path d="M3-2h1.500q1 2-1.500 3M-5 5H4" stroke="#fff"/>',
    fork: '<path d="M-2.500-5V5M-4.500-5v3q0 1.500 2 1.500T-.5-2v-3M3-5V5" stroke="#fff" stroke-width="1.500"/>',
    glass: '<path d="M-3.500-5h7Q3 1 0 1T-3.500-5z" fill="#fff"/><path d="M0 0V4M-2.500 4.500h5" stroke="#fff" stroke-width="1.400"/>',
    plus: '<path d="M-4.500 0h9M0-4.500v9" stroke="#fff" stroke-width="2.800"/>',
    tooth: '<path d="M-4-3Q-3-6 0-4 3-6 4-3L2.500 5 1 5 0 1-1 5-2.500 5z" fill="#fff"/>',
    cap: '<path d="M-5-1 1-4 5-2-1 1zM-3 1v3h6V0z" fill="#fff" opacity=".9"/>',
    bag: '<path d="M-4-2h8v6h-8z" fill="#fff"/><path d="M-2-2q0-3 2-3t2 3" stroke="#fff"/>',
    cart: '<path d="M-5-4h2l1 5h5l1-4h-6" stroke="#fff" stroke-width="1.300"/><circle cx="-1" cy="4" r="1.200" fill="#fff"/><circle cx="3" cy="4" r="1.200" fill="#fff"/>',
    gym: '<path d="M-5-2v4M-3-3v6M-3 0h6M3-3v6M5-2v4" stroke="#fff" stroke-width="1.600"/>',
    gas: '<path d="M-1-4h5v8h-5zM-4 3v-5l2-3" stroke="#fff" stroke-width="1.400"/>',
    dot: '<circle r="3.500" fill="#fff"/>', flag: '<path d="M-3 5V-4H4V1H-3" stroke="#fff" stroke-width="2"/>',
    stone: '<path d="M-3 3V-3Q-3-5 0-5T3-3V3zM-5 3H5V5H-5z" fill="#fff"/>',
    ball: '<path d="M-5-1h10M-5 2h10M-3-1q3-4 6 0M-3 2v2M0-1v3M3 2v2" stroke="#fff" stroke-width="1.300"/>',
    m: '<path d="M-4 4V-3L0 1 4-3V4" stroke="#fff" stroke-width="2"/>', fish: '<path d="M-4-3Q3-6 4 2L1 4Q-4 3-4-3z" fill="#fff"/>'
  };
  const place = (kind, g, t, x, y, labels = [], anchor) => {
    const p = pt(t, x, y);
    o += `<g transform="translate(${p[0].toFixed(1)} ${p[1].toFixed(1)})" fill="none"><circle r="9.5" fill="#fff"/><circle r="9" fill="${kinds[kind][0]}"/>${glyph[g]}</g>`;
    for (const [lx, ly, s] of labels) { const q = pt(t, lx, ly); o += `<text class="p" x="${Math.round(q[0])}" y="${Math.round(q[1] + 4)}" fill="${kinds[kind][1]}" text-anchor="${anchor || 'middle'}">${s}</text>`; }
  };
  place('svc', 'gas', 'A', 5, 45, [[8, 97, 'Helios']]);
  place('edu', 'cap', 'A', 609, 105, [[610, 157, 'Тамос Эдьюкейшн'], [610, 194, 'Физико-'], [610, 231, 'математическая...']]);
  place('sport', 'ball', 'A', 948, 114, [[945, 164, 'Кайрат']]);
  place('med', 'tooth', 'A', 363, 423, [[362, 477, 'Apostol'], [362, 513, 'Dental Clinic']]);
  place('med', 'plus', 'A', 264, 576, [[264, 626, 'Allergo Clinic']]);
  place('food', 'cup', 'A', 330, 760, [[330, 811, 'Coffee Boom']]);
  place('med', 'tooth', 'A', 342, 900, [[343, 952, 'Dr. Poluyev'], [343, 989, 'dental clinic']]);
  place('edu', 'cap', 'A', 822, 484, [[861, 466, 'Колледж-школа-'], [861, 502, 'интернат КазНАИ']], 'start');
  place('edu', 'cap', 'A', 1437, 658, [[1437, 709, 'АлмаУ']]);
  place('svc', 'gas', 'A', 1037, 909, [[1038, 962, 'PetrolAsia']]);
  place('svc', 'gym', 'A', 1248, 991, [[1246, 1041, 'MegaGym']]);
  place('med', 'plus', 'A', 1449, 1110, [[1410, 1111, 'Лор Практика']], 'end');
  place('film', 'dot', 'A', 1326, 1212);
  place('food', 'fork', 'B', 111, 141, [[113, 192, 'Тануки']]);
  place('food', 'cup', 'B', 441, 219, [[442, 272, 'Coffee Boom']]);
  place('food', 'fish', 'B', 132, 285, [[133, 335, 'Qulpynai']]);
  place('food', 'glass', 'B', 636, 408, [[634, 460, 'Community Bar']]);
  place('shop', 'cart', 'B', 603, 696, [[602, 745, 'Magnum']]);
  place('food', 'glass', 'B', 765, 940, [[765, 993, 'Gastreat']]);
  place('svc', 'gym', 'B', 870, 906, [[907, 908, 'Invictus']], 'start');
  place('edu', 'cap', 'B', 339, 1056, [[375, 1040, 'Гимназия № 38'], [375, 1077, 'им. Ломоносова']], 'start');
  place('edu', 'flag', 'B', 1113, 384, [[1112, 436, 'ЗАГС']]);
  place('svc', 'gym', 'B', 1353, 183, [[1353, 230, 'Мастерская'], [1353, 267, 'Таэквондо']]);
  place('svc', 'gas', 'B', 1426, 676, [[1426, 726, 'Helios']]);
  place('dark', 'm', 'C', 393, 726, [[393, 778, 'Miele']]);
  place('med', 'plus', 'C', 555, 712, [[593, 692, 'Центр витилиго'], [593, 729, 'и здоровья кожи']], 'start');
  place('med', 'plus', 'C', 648, 850, [[648, 898, 'Degdar med']]);
  place('food', 'glass', 'C', 168, 1170);
  place('food', 'cup', 'C', 1275, 90, [[1273, 139, 'Юг там,'], [1273, 176, 'где горы']]);
  place('food', 'cup', 'C', 1092, 357, [[1130, 360, 'Coffee Boom']], 'start');
  place('svc', 'gas', 'C', 1215, 438, [[1215, 490, 'Прогресс']]);
  place('med', 'tooth', 'C', 1149, 597, [[1148, 648, 'Иматэк дент']]);
  place('med', 'tooth', 'C', 1293, 1007, [[1254, 1012, 'Profident']], 'end');
  place('edu', 'flag', 'C', 1212, 1155, [[1172, 1141, 'Консульство'], [1172, 1177, 'Узбекистана']], 'end');
  place('shop', 'bag', 'D', 789, 231, [[789, 284, 'Lulu']]);
  place('svc', 'bag', 'D', 633, 543, [[633, 595, 'Mark II'], [633, 632, 'Productions']]);
  place('med', 'plus', 'D', 564, 804, [[564, 855, 'Центр педиатрии'], [564, 891, 'и детской'], [564, 928, 'хирургии']]);
  place('edu', 'cap', 'D', 1278, 588, [[1276, 641, 'Казахстанская'], [1276, 678, 'международная'], [1276, 715, 'школа']]);
  place('svc', 'dot', 'D', 1191, 1149, [[1189, 1201, 'Ратк']]);
  place('svc', 'dot', 'D', 1353, 1155, [[1325, 1203, 'Сервис 2']]);
  place('edu', 'stone', 'D', 690, 1302);

  /* Bus stops */
  const stops = { A: '849,193|180,541|909,622|354,1095|495,1116', B: '75,67|783,325|759,405|75,484|1449,577|171,1032|258,1137|1485,1021|1395,25', C: '69,643|1458,744|1386,874', D: '357,25' };
  for (const t in stops) for (const s of stops[t].split('|')) {
    const [x, y] = pt(t, ...s.split(',').map(Number)).map(Math.round);
    o += `<g transform="translate(${x} ${y})" fill="none" stroke="#fff"><rect x="-6.5" y="-6.5" width="13" height="13" rx="2" fill="#2a73e8" stroke-width=".6"/><path d="M-1-3.500h6M.5-3.500v7M4.500-3.500v7M-4-1v4h3M.5 0h4" stroke-width="1.300"/></g>`;
  }

  /* Placemark */
  o += `<defs><linearGradient id="pm" x1="0" y1="0" x2="1" y2="1"><stop stop-color="#1aa3ff"/><stop offset="1" stop-color="#04429a"/></linearGradient><filter id="bl" x="-50%" y="-50%" width="200%" height="200%"><feGaussianBlur stdDeviation="1.500"/></filter></defs>
  <path d="M955 231L974 211L972 222z" fill="#555" opacity=".55" filter="url(#bl)"/><path d="M954 231L957 213 969 204Q968 219 954 231z" fill="#0b53ad" stroke="#fff" stroke-width=".6"/><circle cx="957" cy="204" r="10.500" fill="#fff" stroke="url(#pm)" stroke-width="3.400"/>`;
  return o;
}

define('city-map', () => `<style>
:host{display:block;position:relative;height:460px;margin-right:15px;overflow:hidden;background:#fcfcf6;font-family:"Noto Sans",sans-serif}
.map{width:100%;height:100%}
text{paint-order:stroke;stroke:#fff;stroke-width:2px;stroke-linejoin:round}
.n{font-size:10px;fill:#8f8f8f;stroke:#fff;stroke-opacity:.5}
.s{font-size:11px;fill:#3c3c3c}.b{font-size:13px}
.d{font-size:13px;fill:#aaa7c2;font-weight:500}.p{font-size:11px;font-weight:500}
.ctl{position:absolute;top:20px;height:36px;border-radius:18px;background:#fff;box-shadow:0 1px 5px rgba(0,0,0,.35);display:flex;align-items:center;font-family:"Liberation Sans",sans-serif}
button{border:0;background:none;padding:0;color:#000}
.zoom{left:865px;width:80px;padding:0 5px}.zoom button{flex:1;display:grid;place-items:center;height:26px}.zoom button+button{border-left:1px solid #e9e9e9}
.type{left:955px;width:106px;padding:0 12px;gap:6px;font-size:15px}
.mini{position:absolute;left:5px;bottom:5px;width:130px;height:92px;border:1px solid #8d8d8d;background:#faf6ee;overflow:hidden}
.mini text{stroke:none;font-size:10px;fill:#a39aae}
.legal{position:absolute;right:8px;bottom:4px;display:flex;flex-direction:column;align-items:flex-end;font-family:"DejaVu Sans",sans-serif;font-size:10px;line-height:18px;color:#000}
.legal .scale{font-family:"Noto Sans",sans-serif;font-size:11px;line-height:14px;color:#333}
.bar{width:57px;height:4px;border:1px solid #000;background:#ffef3a}
.ya{font:17px/28px Roboto,sans-serif;color:#444}.ya i{color:#f33;font-style:normal}
.legal a{text-decoration:underline;margin-left:4px}
</style>
<svg class="map" viewBox="0 0 1905 460" preserveAspectRatio="xMidYMid slice">${drawMap()}</svg>
<div class="ctl zoom"><button aria-label="Отдалить">${svg(13, 13, '0 0 13 13', '<path d="M0 6.500h12" stroke="#444" stroke-width="2"/>')}</button><button aria-label="Приблизить">${svg(13, 13, '0 0 13 13', '<path d="M0 6.500h12M6 .5v12" stroke="#444" stroke-width="2"/>')}</button></div>
<button class="ctl type">${svg(18, 17, '0 0 18 17', '<path d="M9 0l9 5v6l-9 6-9-6V5z" fill="#000"/><path d="M9 2l6 4-6 4.500L3 6z" fill="#fff"/>')}Схема${svg(8, 8, '0 0 8 8', '<path d="M0 0h8L4 8z" fill="#444"/>')}</button>
<div class="mini">${svg(128, 90, '0 0 128 90', `<path d="M82 8l18-2 0 20-12 10-12-8zM32 60l14 0 0 30-10 0zM114 62l14 12v14l-14-6z" fill="#dcefc9"/>
<path d="M25 0l8 22 3 28 14 40M92 0l36 34" stroke="#a8d8f2" stroke-width="1.200"/>
<path d="M0 24L26 0M0 12l28 24M8 4l24 24 18-26M0 40q10 2 16 16 8 12 20 12h16l16-14Q94 30 128 2M48 0v68M60 0l4 42M34 8l60-2 10-6M62 8l4 50M0 0l20 20M36 20l12-14" stroke="#fbd68f" stroke-width="2.600"/>
<rect x="35" y="39" width="60" height="14" fill="#6f7cd0" fill-opacity=".35" stroke="#4557b8"/><text x="64" y="36" text-anchor="middle">БОСТАНДЫКСКИЙ</text><text x="64" y="48" text-anchor="middle">РАЙОН</text>
<path d="M0 74h16v16H0z" fill="#fff"/><path d="M11 79l-6 6M5 80v5h5" stroke="#333"/>`)}</div>
<div class="legal"><span class="scale">100 м</span><span class="bar"></span><span class="ya"><i>Я</i>ндекс</span><span>© Яндекс <a href="#">Условия использования</a></span></div>`);

define('contact-card', `<style>
:host{display:flex;justify-content:center;align-items:center;position:relative;height:126px;margin:-63px var(--gutter) 0;padding-bottom:2px;background:#fff;box-shadow:0 20px 40px rgba(0,0,0,.2)}
div{display:flex;align-items:center}
.a{width:328px;gap:31px}.a p{width:232px}.t{width:294px;gap:29px}
p{margin:0;font-weight:500;font-size:16px;line-height:20px}
span{display:block;margin-bottom:4px;font-weight:400;font-size:14px;color:#c0c0c0}
</style>
<div class="a">${icons.pin('#777', 22, 28, 1.3)}<p><span>Алматы</span>мк-р Алмагуль 18а, ул. Жарокова, уг. Дунаевского</p></div>
<div class="t">${icons.handsetLine('#777', 26)}<p><span>Телефон:</span>8 777 396 24 70</p></div>`);

define('restaurant-list', `<style>
:host{display:block;padding:80px var(--gutter) 0}
h2{margin:0 0 54px;font-size:28px;line-height:32px;font-weight:700}
h3{margin:0 0 18px;font-size:18px;line-height:22px;font-weight:700;color:#1b1b1b}
div{display:grid;gap:20px}
</style><h2>Адреса ресторанов</h2><h3>Алматы</h3><div><slot></slot></div>`);

define('restaurant-item', el => `<style>
:host{display:grid;grid-template-columns:242px 442px 1fr auto;column-gap:28px;min-height:152px;padding:27px 30px 27px 0;border:1px solid var(--line);font-size:13px}
.photo{place-self:center}
.label{display:flex;align-items:center;color:#777}
.addr .label{gap:2px;padding-left:2px}.tel .label{gap:5px}
.addr b{display:block;margin-top:15px;font-size:16px;font-weight:500}
.tel p{margin:22px 0 0}
a{color:var(--red);line-height:24px}
</style>
${svg(76, 76, '0 0 76 76', '<circle cx="38" cy="38" r="35" stroke="#d9d9d9" stroke-width="5"/><path d="M14 32q0-4 4-4h10l2-7q1-3 4-3h9q3 0 4 3l2 5h10q4 0 4 4v22q0 5-5 5H19q-5 0-5-5z" fill="#d9d9d9"/><circle cx="38" cy="42" r="9" stroke="#fff" stroke-width="3"/><path d="M8 23l58 34" stroke="#fff" stroke-width="9"/><path d="M8 20l59 36" stroke="#d9d9d9" stroke-width="4.500"/>', 'class="photo"')}
<div class="addr"><div class="label">${icons.pin('#e31e24', 12, 15, 2.6)}Адрес:</div><b>${el.getAttribute('address')}</b></div>
<div class="tel"><div class="label">${icons.mail}Контакты:</div><p>Тел.: ${el.getAttribute('phone')}</p></div>
<a href="#">Показать на карте</a>`);

define('feedback-form', `<style>
:host{display:block;padding:56px var(--gutter) 50px}
h2{margin:0 0 20px;font-size:30px;line-height:38px;font-weight:700;color:#1b1b1b}
.grid{display:grid;grid-template-columns:1fr 1fr;column-gap:14px}
.col{display:flex;flex-direction:column;gap:19px}
label.f{display:flex;flex-direction:column;gap:3px;flex:1;font-size:13px;color:var(--muted)}
label.f i{font-style:normal;color:#f00}
.f input,textarea{display:block;width:100%;height:40px;padding:0 12px;border:1px solid #f2f2f2;border-radius:3px;background:#fbfcfe;outline:0;resize:none}
textarea{flex:1;padding:12px}
.end{display:flex;justify-content:space-between;margin-top:20px;height:40px}
.ok{display:flex;gap:10px;align-items:center}
.ok input{appearance:none;width:16px;height:16px;margin:0;border:1px solid #c6c6c6;border-radius:2px;background:#f4f4f4}
.ok a{color:var(--red)}
button{width:114px;border:0;border-radius:3px;background:#ccc;color:#fff}
</style>
<h2>Обратная связь</h2>
<form><div class="grid"><div class="col">
<label class="f"><span>Ваше имя <i>*</i></span><input type="text"></label>
<label class="f"><span>Ваш телефон <i>*</i></span><input type="tel"></label>
<label class="f"><span>Эл. почта</span><input type="email"></label></div>
<div class="col"><label class="f"><span>Ваш вопрос <i>*</i></span><textarea></textarea></label></div></div>
<div class="end"><div class="ok"><input type="checkbox" id="ok"><label for="ok">Я согласен(а) на <a href="#">обработку персональных данных</a></label></div><button type="button" disabled>Отправить</button></div></form>`);

define('notice-band', `<style>:host{display:block;padding:30px var(--gutter);background:var(--red);color:#fff}
p{margin:0 0 0 279px;font-size:16px;line-height:24px;font-weight:400}</style>
<p>Тағамдардың фотосуреттері танысу мақсатында ғана ұсынылған және дайын тағамдардан өзгеше болуы мүмкін.<br>Фотографии блюд несут ознакомительный характер и могут отличаться от готовых блюд.</p>`);

define('site-footer', `<style>
:host{display:block;padding:30px var(--gutter) 100px;background:var(--dark);color:#fff}
.top{display:grid;grid-template-columns:1fr 420px;gap:40px}
.cols{display:grid;grid-template-columns:repeat(4,1fr)}
.cols b{display:block;max-width:180px;font-size:15px;line-height:19px;font-weight:700;margin-bottom:24px}
.cols a.sub{color:#6f767e}
form{display:flex;align-items:center;height:43px;padding:0 16px;border-radius:2px;background:#424547}
input{flex:1;min-width:0;border:0;padding:0;background:none;outline:0;color:#fff;font-size:12px}
input::placeholder{color:#7a7d80;opacity:1}
form button{border:0;background:none;padding:0 0 3px}
.call{display:flex;align-items:flex-start;margin:30px 0}
.call span{display:flex;align-items:center;gap:11px;width:215px;font-size:16px;line-height:22px;font-weight:700}
.call button{width:178px;height:44px;border:0;border-radius:3px;background:var(--red);color:#fff;font-size:16px}
brand-logo{--size:100px;margin-left:auto}
.bottom{display:grid;grid-template-columns:1fr auto 1fr;align-items:center;margin-top:34px;font-size:13px;color:#6f767e}
.soc{display:flex;gap:14px}
</style>
<div class="top"><nav class="cols">
<div><b><a href="#">Меню</a></b><a class="sub" href="#">Меню на доставку</a></div>
<div><b><a href="#">Наши рестораны</a></b></div><div><b><a href="#">О компании</a></b></div><div><b><a href="#">Политика конфиденциальности</a></b></div></nav>
<div><form><input type="search" placeholder="Поиск по сайту" aria-label="Поиск по сайту"><button type="button" aria-label="Найти">${icons.search('#c4c8cb', 14, 1.7)}</button></form>
<div class="call"><span>${icons.handsetLine('#ccc', 19)}8 707 33 45 238</span><button>Заказать звонок</button></div><brand-logo></brand-logo></div></div>
<div class="bottom"><span>© 2025 Samurai sushi</span><div class="soc">
<a href="#" aria-label="Facebook">${svg(24, 24, '0 0 24 24', '<circle cx="12" cy="12" r="12" fill="#3b5998"/><path d="M10.300 19v-6.500H8.500V10h1.800V8.500Q10.300 6 13 6h2v2.400h-1.300q-.7 0-.7.8V10h2l-.3 2.500H13V19z" fill="#fff"/>')}</a>
<a href="#" aria-label="Instagram">${svg(24, 24, '0 0 24 24', '<defs><linearGradient id="i" x1="0" y1="0" x2="0" y2="1"><stop stop-color="#5b4fcf"/><stop offset=".45" stop-color="#d6336c"/><stop offset=".75" stop-color="#f9804a"/><stop offset="1" stop-color="#fed573"/></linearGradient></defs><circle cx="12" cy="12" r="12" fill="url(#i)"/><rect x="6" y="6" width="12" height="12" rx="3.500" stroke="#fff" stroke-width="1.400"/><circle cx="12" cy="12" r="2.900" stroke="#fff" stroke-width="1.400"/><circle cx="15.500" cy="8.500" r=".9" fill="#fff"/>')}</a></div></div>`);

define('side-panel', `<style>
:host{position:absolute;right:0;top:var(--top);width:65px;height:var(--height);display:flex;flex-direction:column;justify-content:flex-end;overflow:hidden;background:#fbfbfb;border:solid var(--line);border-width:0 0 1px 1px}
a{flex:none;height:65px;display:grid;place-items:center;border-top:1px solid var(--line)}
</style><a href="#" aria-label="Корзина">${icons.cart}</a><a href="#" aria-label="Избранное">${icons.heart}</a><a href="#" aria-label="Личный кабинет">${icons.lock}</a>`);

define('up-button', `<style>:host{position:absolute;right:20px;top:var(--top)}
button{display:grid;place-items:center;width:46px;height:46px;border:0;border-radius:8px;background:var(--red);padding:0}</style>
<button aria-label="Наверх">${svg(12, 17, '0 0 12 17', '<path d="M6 17V1M1 6l5-5 5 5" stroke="#fff" stroke-width="1.500"/>')}</button>`);
</script>
</body>
</html>
